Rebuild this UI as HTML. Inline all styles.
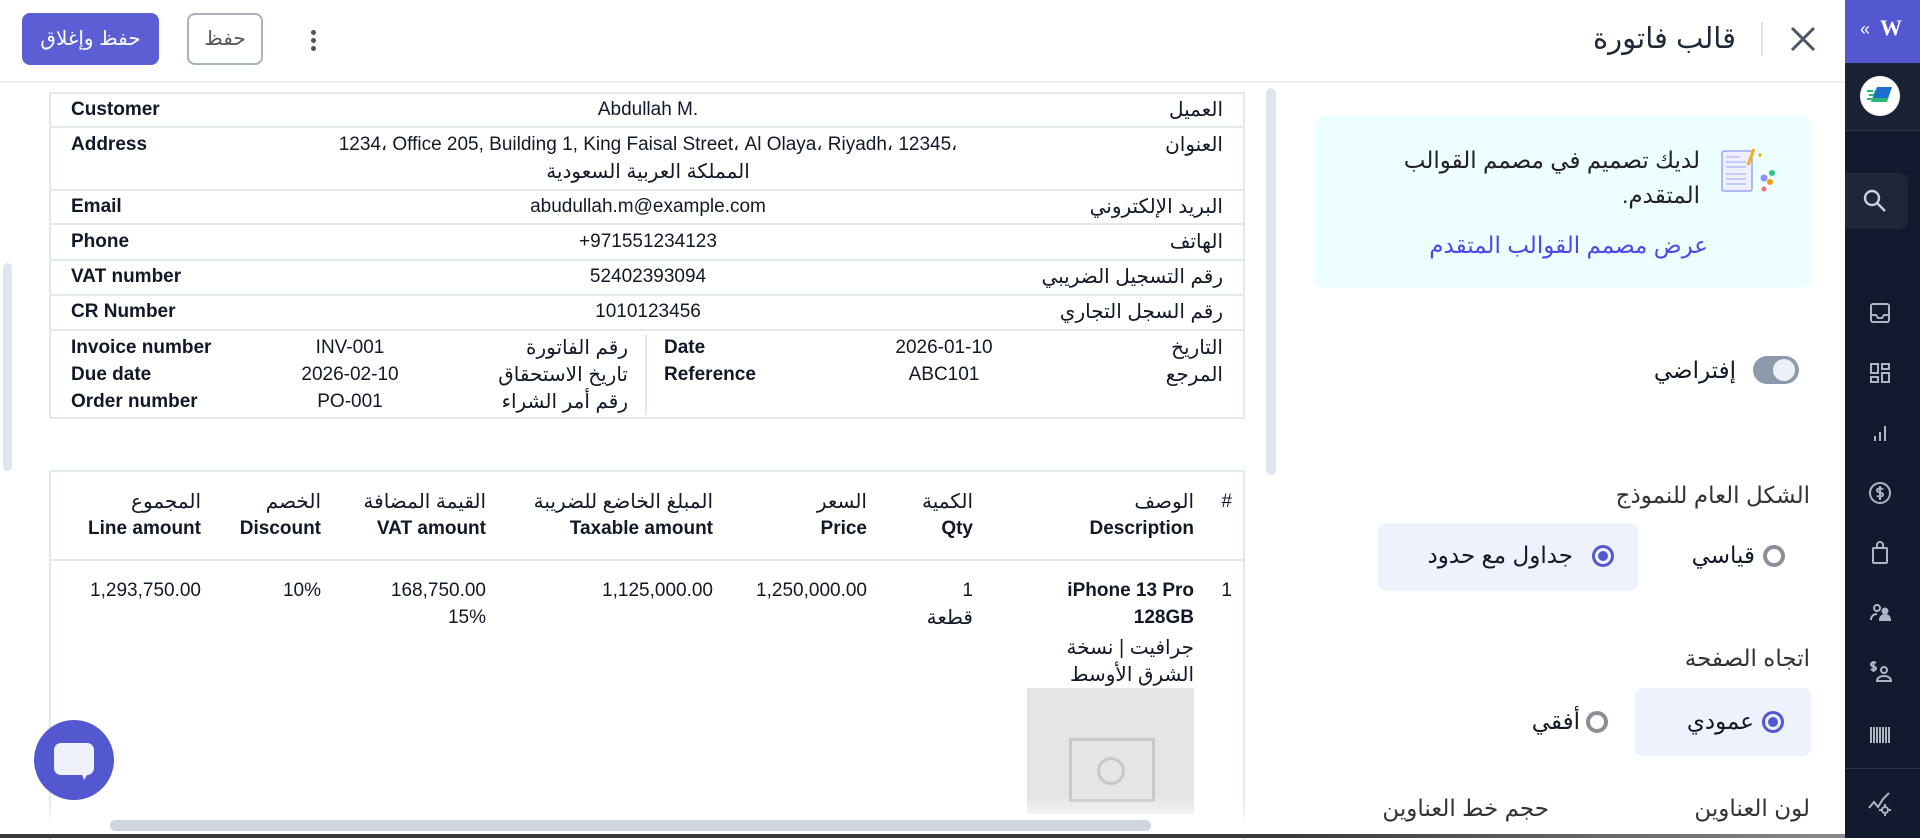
<!DOCTYPE html>
<html><head><meta charset="utf-8"><style>
*{box-sizing:border-box;margin:0;padding:0}
body{width:1920px;height:838px;overflow:hidden;background:#fff;font-family:"Liberation Sans","DejaVu Sans",sans-serif;color:#111827;position:relative}
.a{position:absolute}
.t{position:absolute;white-space:nowrap;font-size:19px;line-height:22px}
.r{text-align:right}
.c{text-align:center}
.b{font-weight:bold}
.ar{direction:rtl;text-align:right;font-size:20px}
.hl{position:absolute;height:2px;background:#e2e8f0}
.vl{position:absolute;width:2px;background:#e2e8f0}
.ico{position:absolute;left:1866px;width:28px;height:28px}
</style></head><body>

<!-- header -->
<div class="a" style="left:0;top:81px;width:1845px;height:2px;background:#eceef1"></div>
<div class="a" style="left:22px;top:13px;width:137px;height:52px;background:#5b5fd3;border-radius:8px;color:#fff;font-size:20px;line-height:52px;text-align:center">حفظ وإغلاق</div>
<div class="a" style="left:187px;top:13px;width:76px;height:52px;border:2px solid #a7b0bd;border-radius:8px;color:#555;font-size:20px;line-height:48px;text-align:center">حفظ</div>
<div class="a" style="left:311px;top:30px;width:5px;height:5px;border-radius:3px;background:#4b5563;box-shadow:0 8px 0 #4b5563,0 16px 0 #4b5563"></div>
<div class="t ar" dir="rtl" style="left:1500px;width:236px;top:21px;font-size:29px;line-height:36px;color:#1f2937">قالب فاتورة</div>
<div class="a" style="left:1761px;top:22px;width:2px;height:34px;background:#dde1e6"></div>
<svg class="a" style="left:1789px;top:25px" width="28" height="28" viewBox="0 0 28 28"><path d="M3 3L25 25M25 3L3 25" stroke="#4b5563" stroke-width="3"/></svg>

<!-- table 1 -->
<div class="a" style="left:49px;top:92px;width:1196px;height:327px;border:2px solid #e2e8f0"></div>
<div class="hl" style="left:49px;top:126px;width:1196px"></div>
<div class="hl" style="left:49px;top:189px;width:1196px"></div>
<div class="hl" style="left:49px;top:223px;width:1196px"></div>
<div class="hl" style="left:49px;top:259px;width:1196px"></div>
<div class="hl" style="left:49px;top:294px;width:1196px"></div>
<div class="hl" style="left:49px;top:329px;width:1196px"></div>
<div class="vl" style="left:645px;top:335px;height:80px"></div>

<div class="t b" style="left:71px;top:99px">Customer</div>
<div class="t c" style="left:448px;width:400px;top:99px">Abdullah M.</div>
<div class="t ar" style="left:1000px;width:223px;top:99px">العميل</div>

<div class="t b" style="left:71px;top:134px">Address</div>
<div class="t c" style="left:298px;width:700px;top:134px">1234، Office 205, Building 1, King Faisal Street، Al Olaya، Riyadh، 12345،</div>
<div class="t c" dir="rtl" style="left:448px;width:400px;top:161px;font-size:20px">المملكة العربية السعودية</div>
<div class="t ar" style="left:1000px;width:223px;top:134px">العنوان</div>

<div class="t b" style="left:71px;top:196px">Email</div>
<div class="t c" style="left:448px;width:400px;top:196px">abudullah.m@example.com</div>
<div class="t ar" style="left:1000px;width:223px;top:196px">البريد الإلكتروني</div>

<div class="t b" style="left:71px;top:231px">Phone</div>
<div class="t c" style="left:448px;width:400px;top:231px">+971551234123</div>
<div class="t ar" style="left:1000px;width:223px;top:231px">الهاتف</div>

<div class="t b" style="left:71px;top:266px">VAT number</div>
<div class="t c" style="left:448px;width:400px;top:266px">52402393094</div>
<div class="t ar" style="left:1000px;width:223px;top:266px">رقم التسجيل الضريبي</div>

<div class="t b" style="left:71px;top:301px">CR Number</div>
<div class="t c" style="left:448px;width:400px;top:301px">1010123456</div>
<div class="t ar" style="left:1000px;width:223px;top:301px">رقم السجل التجاري</div>

<div class="t b" style="left:71px;top:337px">Invoice number</div>
<div class="t b" style="left:71px;top:364px">Due date</div>
<div class="t b" style="left:71px;top:391px">Order number</div>
<div class="t c" style="left:250px;width:200px;top:337px">INV-001</div>
<div class="t c" style="left:250px;width:200px;top:364px">2026-02-10</div>
<div class="t c" style="left:250px;width:200px;top:391px">PO-001</div>
<div class="t ar" style="left:430px;width:198px;top:337px">رقم الفاتورة</div>
<div class="t ar" style="left:430px;width:198px;top:364px">تاريخ الاستحقاق</div>
<div class="t ar" style="left:430px;width:198px;top:391px">رقم أمر الشراء</div>
<div class="t b" style="left:664px;top:337px">Date</div>
<div class="t b" style="left:664px;top:364px">Reference</div>
<div class="t c" style="left:844px;width:200px;top:337px">2026-01-10</div>
<div class="t c" style="left:844px;width:200px;top:364px">ABC101</div>
<div class="t ar" style="left:1000px;width:223px;top:337px">التاريخ</div>
<div class="t ar" style="left:1000px;width:223px;top:364px">المرجع</div>

<!-- table 2 -->
<div class="a" style="left:49px;top:470px;width:1196px;height:370px;border:2px solid #e2e8f0;border-bottom:none"></div>
<div class="hl" style="left:49px;top:559px;width:1196px"></div>
<div class="t r" style="left:1182px;width:50px;top:491px">#</div>
<div class="t ar" style="left:1000px;width:194px;top:491px">الوصف</div>
<div class="t r b" style="left:1000px;width:194px;top:518px">Description</div>
<div class="t ar" style="left:873px;width:100px;top:491px">الكمية</div>
<div class="t r b" style="left:873px;width:100px;top:518px">Qty</div>
<div class="t ar" style="left:717px;width:150px;top:491px">السعر</div>
<div class="t r b" style="left:717px;width:150px;top:518px">Price</div>
<div class="t ar" style="left:463px;width:250px;top:491px">المبلغ الخاضع للضريبة</div>
<div class="t r b" style="left:463px;width:250px;top:518px">Taxable amount</div>
<div class="t ar" style="left:306px;width:180px;top:491px">القيمة المضافة</div>
<div class="t r b" style="left:306px;width:180px;top:518px">VAT amount</div>
<div class="t ar" style="left:191px;width:130px;top:491px">الخصم</div>
<div class="t r b" style="left:191px;width:130px;top:518px">Discount</div>
<div class="t ar" style="left:51px;width:150px;top:491px">المجموع</div>
<div class="t r b" style="left:51px;width:150px;top:518px">Line amount</div>

<div class="t r" style="left:1182px;width:50px;top:580px">1</div>
<div class="t r b" style="left:1000px;width:194px;top:580px">iPhone 13 Pro</div>
<div class="t r b" style="left:1000px;width:194px;top:607px">128GB</div>
<div class="t ar" style="left:1000px;width:194px;top:637px">جرافيت | نسخة</div>
<div class="t ar" style="left:1000px;width:194px;top:664px">الشرق الأوسط</div>
<div class="a" style="left:1027px;top:688px;width:167px;height:126px;background:#e5e5e5"></div>
<div class="a" style="left:1069px;top:738px;width:86px;height:64px;border:3px solid #c8c8c8"></div>
<div class="a" style="left:1097px;top:757px;width:28px;height:28px;border:3px solid #c8c8c8;border-radius:50%"></div>
<div class="t r" style="left:873px;width:100px;top:580px">1</div>
<div class="t ar" style="left:873px;width:100px;top:607px">قطعة</div>
<div class="t r" style="left:717px;width:150px;top:580px">1,250,000.00</div>
<div class="t r" style="left:463px;width:250px;top:580px">1,125,000.00</div>
<div class="t r" style="left:306px;width:180px;top:580px">168,750.00</div>
<div class="t r" style="left:306px;width:180px;top:607px">15%</div>
<div class="t r" style="left:191px;width:130px;top:580px">10%</div>
<div class="t r" style="left:51px;width:150px;top:580px">1,293,750.00</div>

<!-- bottom fade -->
<div class="a" style="left:0;top:796px;width:1290px;height:38px;background:linear-gradient(rgba(255,255,255,0),#fff 85%)"></div>
<!-- scrollbars -->
<div class="a" style="left:110px;top:820px;width:1041px;height:11px;border-radius:6px;background:#cfd6df"></div>
<div class="a" style="left:1266px;top:88px;width:10px;height:387px;border-radius:5px;background:#dfe5ec"></div>
<div class="a" style="left:3px;top:263px;width:9px;height:208px;border-radius:5px;background:#dfe5ec"></div>
<div class="a" style="left:0;top:834px;width:1845px;height:4px;background:linear-gradient(90deg,#3a3a3a 70%,#8a8a8a)"></div>

<!-- chat -->
<div class="a" style="left:34px;top:720px;width:80px;height:80px;border-radius:50%;background:#5458d0"></div>
<div class="a" style="left:54px;top:743px;width:40px;height:32px;border-radius:7px;background:#eef0fb"></div>
<div class="a" style="left:81px;top:772px;width:0;height:0;border-left:3px solid transparent;border-right:5px solid transparent;border-top:8px solid #eef0fb"></div>

<!-- right panel -->
<div class="a" style="left:1314px;top:116px;width:498px;height:172px;background:#ecfeff;border-radius:12px"></div>
<svg class="a" style="left:1720px;top:147px" width="62" height="50" viewBox="0 0 62 50"><rect x="2" y="4" width="30" height="40" rx="2" fill="#eef0ff" stroke="#9ea5f0" stroke-width="1.5"/><path d="M6 10h14M6 15h20M6 20h20M6 27h20M6 32h20M6 37h20" stroke="#b9bef5" stroke-width="1.5"/><path d="M28 18l6-16" stroke="#f2b21c" stroke-width="3"/><path d="M38 8h4M40 6v4" stroke="#f2b21c" stroke-width="1.5"/><circle cx="44" cy="31" r="3.5" fill="#8c8ff0"/><circle cx="52" cy="26" r="3" fill="#34c38f"/><circle cx="50" cy="35" r="3" fill="#f59e0b"/><circle cx="44" cy="42" r="2.5" fill="#f87171"/></svg>
<div class="t ar" style="left:1300px;width:400px;top:143px;font-size:23px;line-height:35px;color:#222">لديك تصميم في مصمم القوالب<br>المتقدم.</div>
<div class="t ar" style="left:1300px;width:408px;top:229px;font-size:23px;line-height:32px;color:#4f46e5">عرض مصمم القوالب المتقدم</div>

<div class="a" style="left:1753px;top:356px;width:46px;height:28px;border-radius:14px;background:#8f99ad"></div>
<div class="a" style="left:1773px;top:359px;width:22px;height:22px;border-radius:50%;background:#eef0f7"></div>
<div class="t ar" style="left:1600px;width:136px;top:355px;font-size:23px;line-height:30px">إفتراضي</div>

<div class="t ar" style="left:1500px;width:310px;top:480px;font-size:23px;line-height:30px;color:#333">الشكل العام للنموذج</div>
<div class="a" style="left:1378px;top:523px;width:260px;height:68px;background:#eef2fd;border-radius:8px"></div>
<div class="a" style="left:1592px;top:545px;width:22px;height:22px;border-radius:50%;border:3px solid #5458d0"></div>
<div class="a" style="left:1598px;top:551px;width:10px;height:10px;border-radius:50%;background:#5458d0"></div>
<div class="t ar" style="left:1400px;width:173px;top:540px;font-size:23px;line-height:30px">جداول مع حدود</div>
<div class="a" style="left:1763px;top:545px;width:22px;height:22px;border-radius:50%;border:4px solid #8b8e96"></div>
<div class="t ar" style="left:1660px;width:95px;top:540px;font-size:23px;line-height:30px">قياسي</div>

<div class="t ar" style="left:1500px;width:310px;top:643px;font-size:23px;line-height:30px;color:#333">اتجاه الصفحة</div>
<div class="a" style="left:1635px;top:688px;width:176px;height:68px;background:#eef2fd;border-radius:8px"></div>
<div class="a" style="left:1762px;top:711px;width:22px;height:22px;border-radius:50%;border:3px solid #5458d0"></div>
<div class="a" style="left:1768px;top:717px;width:10px;height:10px;border-radius:50%;background:#5458d0"></div>
<div class="t ar" style="left:1640px;width:114px;top:706px;font-size:23px;line-height:30px">عمودي</div>
<div class="a" style="left:1586px;top:711px;width:22px;height:22px;border-radius:50%;border:4px solid #8b8e96"></div>
<div class="t ar" style="left:1500px;width:80px;top:706px;font-size:23px;line-height:30px">أفقي</div>

<div class="t ar" style="left:1600px;width:210px;top:793px;font-size:23px;line-height:30px;color:#333">لون العناوين</div>
<div class="t ar" style="left:1340px;width:209px;top:793px;font-size:23px;line-height:30px;color:#333">حجم خط العناوين</div>

<!-- sidebar -->
<div class="a" style="left:1845px;top:0;width:75px;height:838px;background:#111a2e"></div>
<div class="a" style="left:1845px;top:0;width:75px;height:63px;background:#5458d0"></div>
<div class="t" style="left:1860px;top:18px;color:#fff;font-size:18px">«</div>
<div class="t b" style="left:1880px;top:17px;color:#fff;font-size:22px;font-family:'Liberation Serif',serif">W</div>
<div class="a" style="left:1845px;top:63px;width:75px;height:67px;background:#1a2336"></div>
<div class="a" style="left:1845px;top:130px;width:75px;height:1px;background:#2c3547"></div>
<div class="a" style="left:1860px;top:76px;width:40px;height:40px;border-radius:50%;background:#fff"></div>
<svg class="a" style="left:1866px;top:84px" width="28" height="24" viewBox="0 0 28 24"><path d="M9 6h16l-4 12H5z" fill="#2bb673"/><path d="M11 3h15l-4 11H7z" fill="#1f6fd1"/><path d="M1 7h6M3 11h5M1 15h5" stroke="#2bb673" stroke-width="2"/></svg>
<div class="a" style="left:1845px;top:173px;width:63px;height:56px;background:#1e2739;border-radius:0 8px 8px 0"></div>
<svg class="a" style="left:1862px;top:188px" width="26" height="26" viewBox="0 0 26 26"><circle cx="10" cy="10" r="7" fill="none" stroke="#cbd2dc" stroke-width="2.4"/><path d="M15 15l8 8" stroke="#cbd2dc" stroke-width="2.4"/></svg>
<svg class="ico" style="top:299px" viewBox="0 0 28 28" fill="none" stroke="#aeb6c3" stroke-width="2"><rect x="5" y="5" width="18" height="18" rx="2"/><path d="M5 16h5l2 3h4l2-3h5"/></svg>
<svg class="ico" style="top:359px" viewBox="0 0 28 28" fill="none" stroke="#aeb6c3" stroke-width="2"><rect x="5" y="5" width="7" height="9"/><rect x="16" y="5" width="7" height="5"/><rect x="5" y="18" width="7" height="5"/><rect x="16" y="14" width="7" height="9"/></svg>
<svg class="ico" style="top:419px" viewBox="0 0 28 28" fill="none" stroke="#aeb6c3" stroke-width="2"><path d="M9 22v-5M14 22v-9M19 22V7"/></svg>
<svg class="ico" style="top:479px" viewBox="0 0 28 28" fill="none" stroke="#aeb6c3" stroke-width="2"><circle cx="14" cy="14" r="10"/><path d="M17 10.5c-1-1.5-6-1.5-6 1s6 1.5 6 4-5 2.5-6 1M14 7v14"/></svg>
<svg class="ico" style="top:539px" viewBox="0 0 28 28" fill="none" stroke="#aeb6c3" stroke-width="2"><rect x="7" y="9" width="14" height="15" rx="1"/><path d="M11 9V6a3 3 0 016 0v3"/></svg>
<svg class="ico" style="top:599px" viewBox="0 0 28 28" fill="none" stroke="#aeb6c3" stroke-width="2"><circle cx="11" cy="9" r="3"/><path d="M5 21c0-4 3-6 6-6"/><circle cx="19" cy="12" r="2.5" fill="#aeb6c3"/><path d="M14 21c0-3 2-5 5-5s5 2 5 5z" fill="#aeb6c3"/></svg>
<svg class="ico" style="top:658px" viewBox="0 0 28 28" fill="none" stroke="#aeb6c3" stroke-width="2"><path d="M10 5c-1-1-5-1-5 1.5S10 8 10 10.5 6 12 5 11M7.5 3v11"/><circle cx="18" cy="12" r="3"/><path d="M11 23c0-3 3-5 7-5s7 2 7 5z"/></svg>
<svg class="ico" style="top:721px" viewBox="0 0 28 28" fill="none" stroke="#aeb6c3" stroke-width="2"><path d="M5 6v16M8 6v16M11 6v16M14 6v16M17 6v16M20 6v16M23 6v16"/></svg>
<div class="a" style="left:1845px;top:768px;width:75px;height:1px;background:#2c3547"></div>
<svg class="ico" style="top:790px" viewBox="0 0 28 28" fill="none" stroke="#aeb6c3" stroke-width="2"><path d="M3 18l5-6 4 5 5-8 6-6"/><circle cx="19" cy="20" r="3"/><path d="M19 14v2M19 24v2M13 20h2M23 20h2"/></svg>
</body></html>
